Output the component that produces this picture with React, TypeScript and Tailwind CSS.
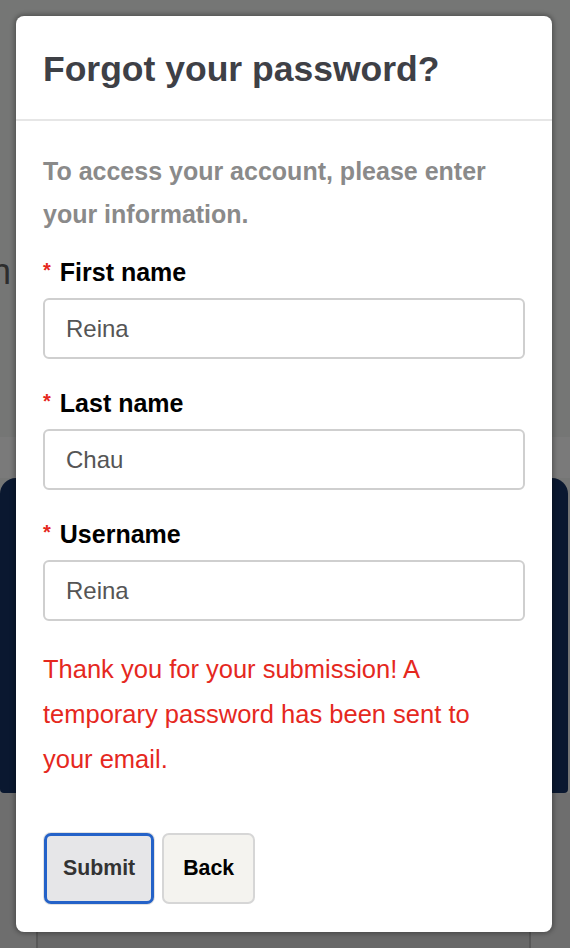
import React from 'react'

const font = "font-['Liberation_Sans',Arial,Helvetica,sans-serif]"

function Field({ label, value }: { label: string; value: string }) {
  return (
    <div className="flex flex-col">
      <div className="flex items-center h-[30px] leading-[30px]">
        <span className="text-[#e5281e] text-[20px] font-bold mr-[9px] -mt-[4px]">*</span>
        <span className="text-[25px] font-bold text-black">{label}</span>
      </div>
      <input
        readOnly
        value={value}
        className={`mt-[11px] h-[61px] w-full rounded-[6px] border-2 border-[#cfcfcf] bg-white pl-[21px] text-[24px] text-[#555] outline-none ${font}`}
      />
    </div>
  )
}

export default function App() {
  return (
    <div className={`relative w-[570px] h-[948px] overflow-hidden bg-[#757675] ${font}`}>
      {/* page behind the dialog, already dimmed */}
      <div className="flex flex-col h-full">
        <div className="h-[437px] shrink-0 pt-[254px]">
          <div className="-ml-[9px] text-[36px] font-light text-[#2d2d2d] leading-none">n</div>
        </div>
        <div className="h-[41px] shrink-0 bg-[#7a7a7a]" />
        <div className="h-[315px] shrink-0 w-[568px] bg-[#0a1830] rounded-t-[16px] rounded-b-[4px]" />
        <div className="flex-1 bg-[#6e6e6e] pt-[60px] pl-[36px]">
          <div className="w-[495px] h-[200px] border-2 border-[#585858] bg-[#686868]" />
        </div>
      </div>

      {/* dialog */}
      <div className="absolute left-[16px] top-[16px] w-[536px] h-[916px] bg-white rounded-[8px] shadow-[0_0_4px_2px_rgba(0,0,0,0.28)] flex flex-col">
        <div className="h-[105px] border-b-2 border-[#e6e6e6] px-[27px] flex items-center pt-[4px]">
          <h1 className="text-[35.5px] font-bold text-[#3e4046] leading-none">Forgot your password?</h1>
        </div>
        <div className="px-[27px] pt-[29px] flex flex-col">
          <p className="text-[25px] font-bold text-[#8a8a8a] leading-[43px]">
            To access your account, please enter your information.
          </p>
          <div className="mt-[21px] flex flex-col gap-[29px]">
            <Field label="First name" value="Reina" />
            <Field label="Last name" value="Chau" />
            <Field label="Username" value="Reina" />
          </div>
          <p className="mt-[26px] text-[25.5px] text-[#e5281e] leading-[45px]">
            Thank you for your submission! A temporary password has been sent to your email.
          </p>
          <div className="mt-[51px] flex gap-[8px] pl-[1px]">
            <button className="h-[71px] px-[16px] rounded-[7px] border-[3px] border-[#2462c8] ring-1 ring-[#e2e2e2] bg-[#e6e6e8] text-[21.3px] font-bold text-[#333]">
              Submit
            </button>
            <button className="h-[71px] px-[19px] rounded-[7px] border-2 border-[#d6d6d6] bg-[#f4f3ef] text-[21.3px] font-bold text-black">
              Back
            </button>
          </div>
        </div>
      </div>
    </div>
  )
}
